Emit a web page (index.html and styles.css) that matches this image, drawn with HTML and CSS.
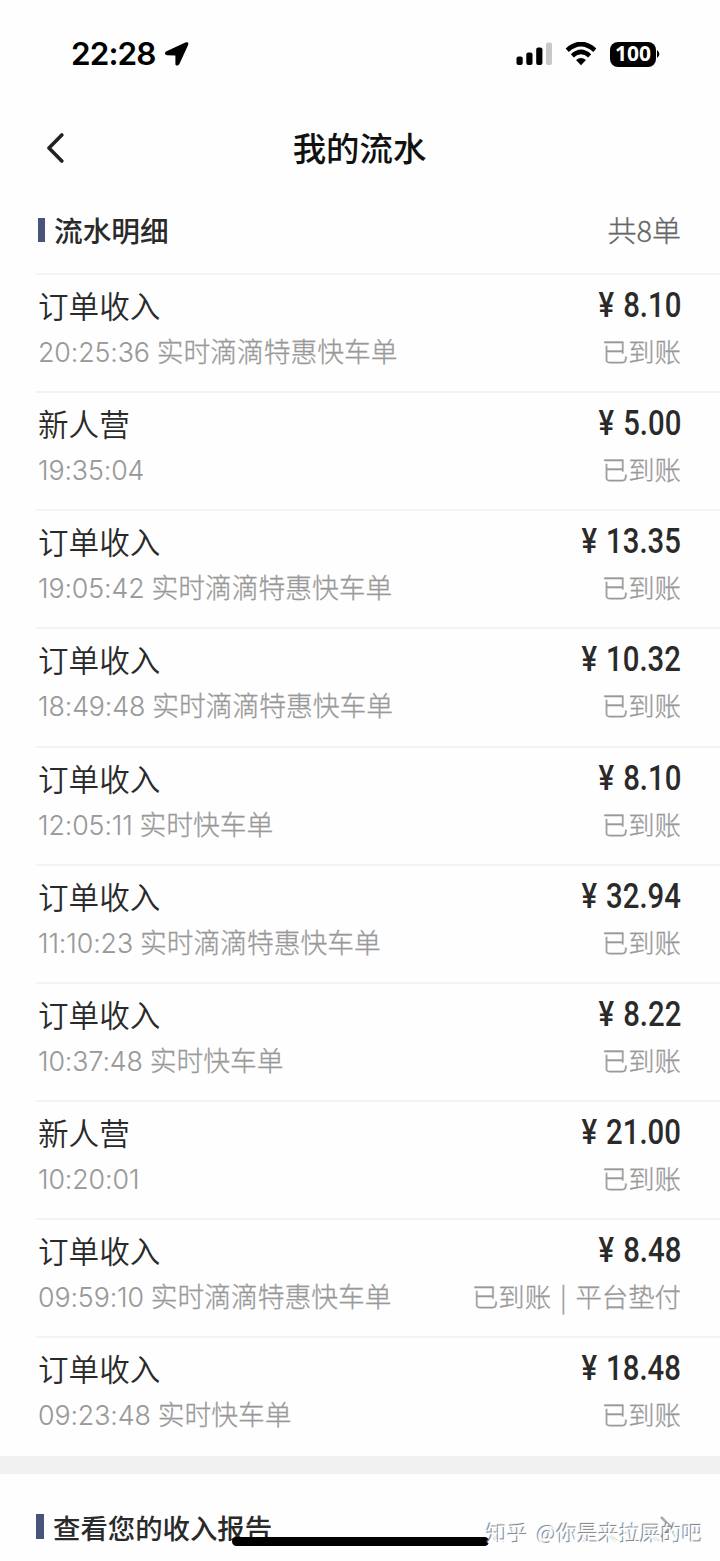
FILE: index.html
```html
<!DOCTYPE html>
<html lang="zh-CN">
  <head>
    <meta charset="UTF-8" />
    <title>我的流水</title>
    <meta name="viewport" content="width=device-width, initial-scale=1" />
    <link rel="stylesheet" href="styles.css">
  </head>
  <body>
    <div class="status-bar">
      <span class="clock">22:28</span>
      <svg class="location" width="26" height="26" viewBox="0 0 26 26">
        <path d="M2 10.6 L21.3 1.6 Q25.2 .4 24.1 3.9 L15.4 23 Q13.4 26 11.4 23.4 L11.4 14.6 L3 14.2 Q-.6 13 2 10.6 Z"/>
      </svg>
      <div class="status-icons">
        <svg width="36" height="24" viewBox="0 0 36 24">
          <rect x="0.5" y="14.5" width="6.2" height="8.5" rx="2"/>
          <rect x="10.3" y="10.5" width="6.2" height="12.5" rx="2"/>
          <rect x="20.2" y="5.5" width="6.2" height="17.5" rx="2"/>
          <rect x="30" y="0.5" width="6" height="22.5" rx="2" fill="#c8c8c8"/>
        </svg>
        <svg class="wifi" width="32" height="24" viewBox="0 0 32 24">
          <path d="M2.2 8.2 Q16 -4.2 29.8 8.2" fill="none" stroke="#000" stroke-width="4.6"/>
          <path d="M7.3 13.8 Q16 6 24.7 13.8" fill="none" stroke="#000" stroke-width="4.4"/>
          <path d="M11 18 Q16 13.8 21 18 L16 23.2 Z"/>
        </svg>
        <span class="battery">100</span>
        <svg class="battery-cap" width="4" height="8" viewBox="0 0 4 8">
          <path d="M1 0 Q3.4 1.8 3.4 4 Q3.4 6.2 1 8 Z"/>
        </svg>
      </div>
    </div>

    <div class="nav">
      <svg class="back" width="18" height="32" viewBox="0 0 18 32">
        <path d="M15.8 3 L3 16 L15.8 29"/>
      </svg>
      <h1>我的流水</h1>
    </div>

    <div class="section-head">
      <h2>流水明细</h2>
      <span class="count">共8单</span>
    </div>

    <ul class="list">
      <li>
        <div class="line"><span class="name">订单收入</span><span class="amount">¥ 8.10</span></div>
        <div class="line sub"><span><span class="time">20:25:36</span> 实时滴滴特惠快车单</span><span class="state">已到账</span></div>
      </li>
      <li>
        <div class="line"><span class="name">新人营</span><span class="amount">¥ 5.00</span></div>
        <div class="line sub"><span><span class="time">19:35:04</span></span><span class="state">已到账</span></div>
      </li>
      <li>
        <div class="line"><span class="name">订单收入</span><span class="amount">¥ 13.35</span></div>
        <div class="line sub"><span><span class="time">19:05:42</span> 实时滴滴特惠快车单</span><span class="state">已到账</span></div>
      </li>
      <li>
        <div class="line"><span class="name">订单收入</span><span class="amount">¥ 10.32</span></div>
        <div class="line sub"><span><span class="time">18:49:48</span> 实时滴滴特惠快车单</span><span class="state">已到账</span></div>
      </li>
      <li>
        <div class="line"><span class="name">订单收入</span><span class="amount">¥ 8.10</span></div>
        <div class="line sub"><span><span class="time">12:05:11</span> 实时快车单</span><span class="state">已到账</span></div>
      </li>
      <li>
        <div class="line"><span class="name">订单收入</span><span class="amount">¥ 32.94</span></div>
        <div class="line sub"><span><span class="time">11:10:23</span> 实时滴滴特惠快车单</span><span class="state">已到账</span></div>
      </li>
      <li>
        <div class="line"><span class="name">订单收入</span><span class="amount">¥ 8.22</span></div>
        <div class="line sub"><span><span class="time">10:37:48</span> 实时快车单</span><span class="state">已到账</span></div>
      </li>
      <li>
        <div class="line"><span class="name">新人营</span><span class="amount">¥ 21.00</span></div>
        <div class="line sub"><span><span class="time">10:20:01</span></span><span class="state">已到账</span></div>
      </li>
      <li>
        <div class="line"><span class="name">订单收入</span><span class="amount">¥ 8.48</span></div>
        <div class="line sub"><span><span class="time">09:59:10</span> 实时滴滴特惠快车单</span><span class="state advance">已到账 | 平台垫付</span></div>
      </li>
      <li>
        <div class="line"><span class="name">订单收入</span><span class="amount">¥ 18.48</span></div>
        <div class="line sub"><span><span class="time">09:23:48</span> 实时快车单</span><span class="state">已到账</span></div>
      </li>
    </ul>

    <div class="report">
      <h2>查看您的收入报告</h2>
      <svg class="more" width="14" height="24" viewBox="0 0 14 24">
        <path d="M2 2 L12 12 L2 22"/>
      </svg>
    </div>

    <div class="home-bar"></div>
    <div class="watermark">知乎 @你是来拉屎的吧</div>
  </body>
</html>
```
FILE: styles.css
```css
* {
  padding: 0;
  margin: 0;
  box-sizing: border-box;
}
body {
  position: relative;
  width: 720px;
  height: 1561px;
  overflow: hidden;
  background-color: #fefefe;
  color: #2a2a2a;
  font-family: "Noto Sans CJK SC", sans-serif;
}
.status-bar {
  display: flex;
  align-items: center;
  height: 108px;
  padding: 0 60px 0 71px;
}
.clock {
  margin-top: -2px;
  font-family: Inter, sans-serif;
  font-size: 31.5px;
  font-weight: 600;
  letter-spacing: -0.9px;
  color: #000;
}
.location {
  margin-left: 8px;
}
.status-icons {
  display: flex;
  align-items: center;
  margin-left: auto;
}
.wifi {
  margin-left: 13px;
}
.battery {
  width: 46px;
  height: 25px;
  margin-left: 13px;
  border-radius: 8px;
  background-color: #000;
  color: #fff;
  font-family: "Open Sans", sans-serif;
  font-size: 21px;
  font-weight: 700;
  line-height: 23px;
  text-align: center;
}
.nav {
  display: flex;
  align-items: center;
  height: 82px;
  padding: 0 0 2px 46px;
}
.back {
  fill: none;
  stroke: #222;
  stroke-width: 3.6;
  stroke-linecap: round;
  stroke-linejoin: round;
}
h1 {
  flex: 1;
  margin: -4px 65px 0 0;
  color: #111;
  font-size: 33.4px;
  font-weight: 500;
  text-align: center;
}
.section-head {
  display: flex;
  align-items: center;
  justify-content: space-between;
  height: 83px;
  padding: 0 39px 4px 38px;
}
h2 {
  display: flex;
  align-items: center;
  font-size: 28.7px;
  font-weight: 500;
  line-height: 40px;
}
h2::before {
  content: "";
  width: 7px;
  height: 24px;
  margin-right: 9px;
  background-color: #48547a;
}
.count {
  margin-top: -2px;
  color: #666;
  font-size: 29px;
  font-weight: 300;
  -webkit-text-stroke: 0.3px;
}
.list {
  height: 1183px;
  list-style: none;
}
li {
  height: 118.15px;
  margin-left: 36px;
  padding: 7px 39px 0 2px;
  border-top: 2px solid #f3f3f3;
}
.line {
  display: flex;
  justify-content: space-between;
  height: 46px;
  line-height: 46px;
}
.name {
  font-size: 30.6px;
  font-weight: 350;
}
.amount {
  font-family: Roboto, sans-serif;
  font-size: 34.5px;
  font-weight: 500;
  word-spacing: 2px;
  transform: scaleX(0.85);
  transform-origin: right center;
}
.sub {
  color: #999;
  font-size: 26.75px;
  font-weight: 300;
  -webkit-text-stroke: 0.3px;
}
.time {
  margin-right: 1px;
  font-family: Inter, sans-serif;
  letter-spacing: -0.1px;
  -webkit-text-stroke: 0.1px;
}
.state {
  font-size: 26.4px;
}
.advance {
  word-spacing: 3px;
}
.report {
  display: flex;
  align-items: center;
  justify-content: space-between;
  height: 105px;
  padding: 18px 47px 0 36px;
  border-top: 18px solid #f1f1f1;
}
.report h2 {
  font-size: 27.4px;
}
.report h2::before {
  height: 25px;
  width: 8px;
}
.more {
  fill: none;
  stroke: #aaa;
  stroke-width: 2.5;
}
.home-bar {
  position: absolute;
  left: 232px;
  top: 1537px;
  width: 257px;
  height: 9px;
  border-radius: 5px;
  background-color: #000;
}
.watermark {
  position: absolute;
  right: 17px;
  top: 1516px;
  color: #fff;
  font-size: 20.9px;
  line-height: 32px;
  word-spacing: 4px;
  text-shadow: -1px -1px 1px #777;
  white-space: nowrap;
}
```
